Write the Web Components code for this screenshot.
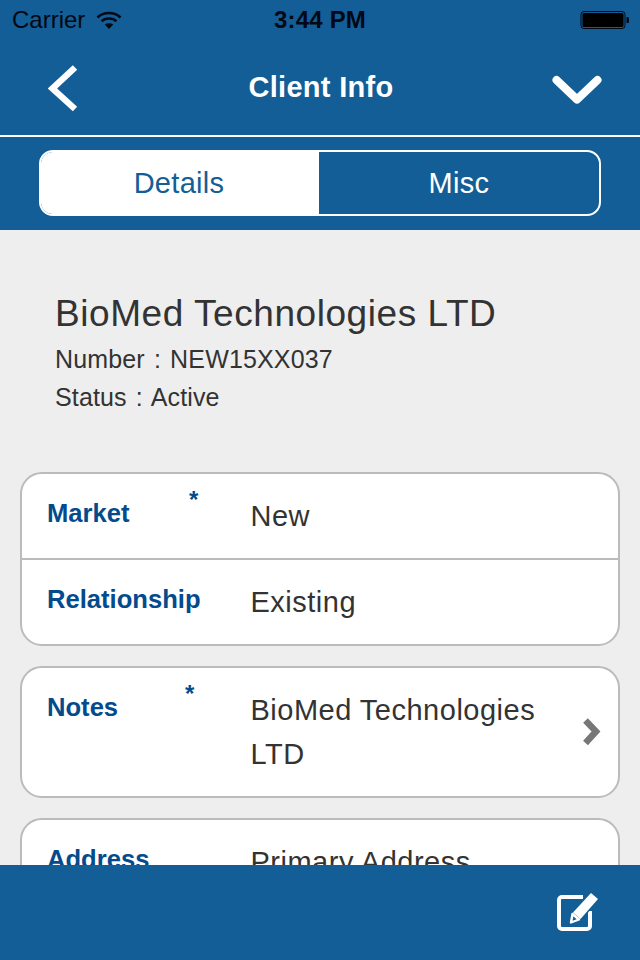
<!DOCTYPE html>
<html>
<head>
<meta charset="utf-8">
<style>
  html, body { margin: 0; padding: 0; }
  body { width: 640px; height: 960px; overflow: hidden; font-family: "Liberation Sans", Arial, sans-serif; }
</style>
</head>
<body>
<client-screen>
  <status-bar slot="top"></status-bar>
  <nav-bar slot="top" title="Client Info"></nav-bar>
  <seg-control slot="top" first="Details" second="Misc"></seg-control>

  <client-head name="BioMed Technologies LTD">
    <div>Number : NEW15XX037</div>
    <div>Status : Active</div>
  </client-head>

  <info-card>
    <info-row label="Market" star="142" height="84">New</info-row>
    <info-row label="Relationship" height="86" divider>Existing</info-row>
  </info-card>
  <info-card>
    <info-row label="Notes" star="138" height="128" chevron>BioMed Technologies LTD</info-row>
  </info-card>
  <info-card>
    <info-row label="Address" height="128">Primary Address</info-row>
  </info-card>

  <bottom-bar slot="bottom"></bottom-bar>
</client-screen>

<script>
class ClientScreen extends HTMLElement {
  constructor() {
    super();
    this.shadowDOM = this.attachShadow({mode: 'open'});
    this.shadowDOM.innerHTML = `
      <style>
        :host { display: flex; flex-direction: column; width: 640px; height: 960px; background: #eeeeee; }
        .content { flex: 1; min-height: 0; overflow: hidden; padding: 0 20px; display: flex; flex-direction: column; gap: 20px; }
      </style>
      <slot name="top"></slot>
      <div class="content"><slot></slot></div>
      <slot name="bottom"></slot>
    `;
  }
}

class StatusBar extends HTMLElement {
  constructor() {
    super();
    this.shadowDOM = this.attachShadow({mode: 'open'});
    this.shadowDOM.innerHTML = `
      <style>
        :host { display: grid; grid-template-columns: 1fr auto 1fr; align-items: center; height: 40px; padding: 0 12px; box-sizing: border-box; background: #135e96; color: #020814; font-size: 24px; }
        .left { display: flex; align-items: center; gap: 11px; }
        .time { font-weight: bold; font-size: 24px; letter-spacing: 0.2px; }
        .batt { justify-self: end; display: block; margin-right: -2px; }
        svg { display: block; }
      </style>
      <div class="left">
        <span>Carrier</span>
        <svg width="26" height="20" viewBox="0 0 26 20" fill="none" stroke="#020814" stroke-width="2.6">
          <path d="M1.5 7.5 C7.5 1.5 18.5 1.5 24.5 7.5"/>
          <path d="M5.6 11.2 C9.5 7.6 16.5 7.6 20.4 11.2"/>
          <path d="M13 19 L8.8 14.4 C11 12.8 15 12.8 17.2 14.4 Z" fill="#020814" stroke="none"/>
        </svg>
      </div>
      <span class="time">3:44 PM</span>
      <svg class="batt" width="50" height="20" viewBox="0 0 50 20">
        <rect x="1" y="1.5" width="44" height="17" rx="3" fill="none" stroke="#020814" stroke-width="1"/>
        <rect x="2.5" y="3" width="41" height="14" rx="1.5" fill="#000"/>
        <path d="M46.5 7 h1 a1.5 1.5 0 0 1 1.5 1.5 v3 a1.5 1.5 0 0 1 -1.5 1.5 h-1 z" fill="#020814"/>
      </svg>
    `;
  }
}

class NavBar extends HTMLElement {
  constructor() {
    super();
    this.shadowDOM = this.attachShadow({mode: 'open'});
    this.shadowDOM.innerHTML = `
      <style>
        :host { display: grid; grid-template-columns: 1fr auto 1fr; align-items: center; height: 97px; padding: 0 38px 0 48px; box-sizing: border-box; background: #135e96; border-bottom: 2px solid #fff; color: #fff; }
        h1 { margin: 0; font-size: 29px; letter-spacing: 0.3px; font-weight: bold; transform: translateX(-4px); }
        svg { display: block; }
        .down { margin-top: 5px; justify-self: end; }
      </style>
      <svg class="back" width="30" height="48" viewBox="0 0 30 48" fill="none" stroke="#fff" stroke-width="6.4">
        <path d="M27 3.5 L4.5 24.5 L27 45"/>
      </svg>
      <h1>${this.getAttribute('title')}</h1>
      <svg class="down" width="50" height="30" viewBox="0 0 50 30" fill="none" stroke="#fff" stroke-width="8" stroke-linecap="round" stroke-linejoin="round">
        <path d="M4.5 5 L25 24.5 L45.5 5"/>
      </svg>
    `;
  }
}

class SegControl extends HTMLElement {
  constructor() {
    super();
    this.shadowDOM = this.attachShadow({mode: 'open'});
    this.shadowDOM.innerHTML = `
      <style>
        :host { display: block; padding: 13px 39px 14px; background: #135e96; height: 93px; box-sizing: border-box; }
        .seg { display: grid; grid-template-columns: 278px 1fr; height: 66px; box-sizing: border-box; border: 2px solid #fff; border-radius: 14px; overflow: hidden; font-size: 29px; letter-spacing: 0.3px; }
        .seg div { display: flex; align-items: center; justify-content: center; padding-top: 1px; }
        .on { background: #fff; color: #135e96; padding-right: 2px; }
        .off { color: #fff; }
      </style>
      <div class="seg">
        <div class="on">${this.getAttribute('first')}</div>
        <div class="off">${this.getAttribute('second')}</div>
      </div>
    `;
  }
}

class ClientHead extends HTMLElement {
  constructor() {
    super();
    this.shadowDOM = this.attachShadow({mode: 'open'});
    this.shadowDOM.innerHTML = `
      <style>
        :host { display: block; padding: 62px 0 40px 35px; color: #333; margin-bottom: -20px; height: 242px; box-sizing: border-box; flex: none; }
        h2 { margin: 0 0 4px; font-size: 37px; letter-spacing: 0.56px; line-height: 44px; font-weight: normal; }
        .sub { font-size: 25px; letter-spacing: 0.15px; word-spacing: 2px; line-height: 38px; }
      </style>
      <h2>${this.getAttribute('name')}</h2>
      <div class="sub"><slot></slot></div>
    `;
  }
}

class InfoCard extends HTMLElement {
  constructor() {
    super();
    this.shadowDOM = this.attachShadow({mode: 'open'});
    this.shadowDOM.innerHTML = `
      <style>
        :host { display: block; flex: none; background: #fff; border: 2px solid #bbbbbb; border-radius: 22px; overflow: hidden; }
      </style>
      <slot></slot>
    `;
  }
}

class InfoRow extends HTMLElement {
  constructor() {
    super();
    this.shadowDOM = this.attachShadow({mode: 'open'});
    const star = this.getAttribute('star');
    this.shadowDOM.innerHTML = `
      <style>
        :host { display: flex; box-sizing: border-box; height: ${this.getAttribute('height')}px; padding: 17px 16px 0 25px; ${this.hasAttribute('divider') ? 'border-top: 2px solid #bbbbbb;' : ''} }
        .label { flex: none; width: 203.5px; display: flex; align-items: flex-start; color: #034b8c; font-weight: bold; font-size: 25.6px; line-height: 44px; }
        .name { flex: none; width: ${star || 204}px; }
        .star { font-size: 24px; line-height: 24px; margin-top: -3px; }
        .value { flex: 1; color: #333; font-size: 29px; letter-spacing: 0.5px; line-height: 44px; padding-top: 3px; }
        .chev { flex: none; align-self: flex-start; margin-top: 33px; width: 20px; }
        svg { display: block; }
      </style>
      <div class="label">
        <span class="name">${this.getAttribute('label')}</span>
        ${star ? '<span class="star">*</span>' : ''}
      </div>
      <div class="value"><slot></slot></div>
      ${this.hasAttribute('chevron') ? `<div class="chev"><svg width="20" height="28" viewBox="0 0 20 28" fill="none" stroke="#777" stroke-width="6.5"><path d="M3.5 2.5 L14 13.5 L3.5 25"/></svg></div>` : ''}
    `;
  }
}

class BottomBar extends HTMLElement {
  constructor() {
    super();
    this.shadowDOM = this.attachShadow({mode: 'open'});
    this.shadowDOM.innerHTML = `
      <style>
        :host { display: flex; justify-content: flex-end; height: 95px; padding: 28px 42px 0 0; box-sizing: border-box; background: #135e96; flex: none; }
        svg { display: block; }
      </style>
      <svg width="42" height="40" viewBox="0 0 42 40">
        <path d="M27 4 H6 A3 3 0 0 0 3 7 V33 A3 3 0 0 0 6 36 H31 A3 3 0 0 0 34 33 V18" fill="none" stroke="#fff" stroke-width="4"/>
        <path d="M35 0 L42 6 L24.500 26 L17 19.500 Z" fill="#135e96" stroke="#135e96" stroke-width="3"/>
        <path d="M35 0 L42 6 L24.500 26 L17 19.500 Z" fill="#fff"/>
        <path d="M16.500 21 L23 26.500 L15 29.500 Z" fill="#135e96" stroke="#fff" stroke-width="2.4" stroke-linejoin="round"/>
      </svg>
    `;
  }
}

customElements.define('client-screen', ClientScreen);
customElements.define('status-bar', StatusBar);
customElements.define('nav-bar', NavBar);
customElements.define('seg-control', SegControl);
customElements.define('client-head', ClientHead);
customElements.define('info-card', InfoCard);
customElements.define('info-row', InfoRow);
customElements.define('bottom-bar', BottomBar);
</script>
</body>
</html>
